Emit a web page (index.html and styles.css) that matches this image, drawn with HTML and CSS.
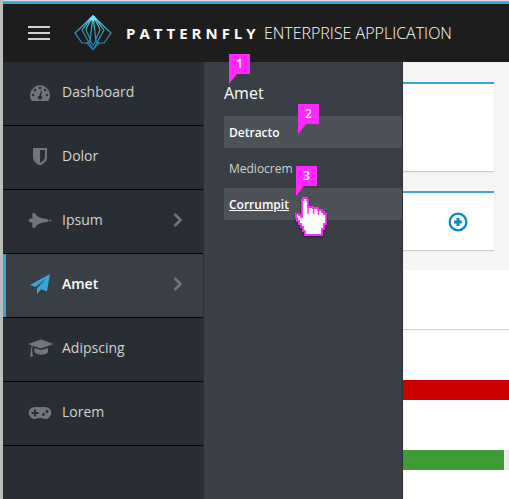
FILE: index.html
```html
<!DOCTYPE html>
<html lang="en">
<head>
<meta charset="utf-8">
<meta name="viewport" content="width=device-width, initial-scale=1">
<title>PatternFly Enterprise Application</title>
<link rel="stylesheet" href="styles.css">
</head>
<body>
<div class="app">
  <header class="masthead">
    <button class="toggle" type="button" aria-label="Toggle navigation"><span></span><span></span><span></span></button>
    <a class="brand" href="#">
      <svg class="logo" viewBox="0 0 38 36" aria-hidden="true">
        <defs><linearGradient id="g" x1="0" y1="0" x2="0" y2="36" gradientUnits="userSpaceOnUse"><stop offset="0" stop-color="#5ff0ff"/><stop offset=".45" stop-color="#349db5"/><stop offset="1" stop-color="#2272b5"/></linearGradient></defs>
        <g fill="none" stroke="url(#g)" stroke-width="1.200">
          <path d="M19 1 1 18l7 10h8M19 1l18 17-7 10h-8"/>
          <path d="M19 1 8 15l11 19.500L30 15Z"/>
          <path d="M19 1l-6 11-1 3 5 11M19 1l6 11 1 3-5 11"/>
          <path d="M19 1l-3 25 3 4 3-4Z"/>
          <path d="m16 26-3 2 6 6.500 6-6.500-3-2"/>
        </g>
        <path d="m19 0 4 4-4 2-4-2Z" fill="#5ff0ff"/>
      </svg>
      <span class="brand-text"><strong>PATTERNFLY</strong> <span>ENTERPRISE APPLICATION</span></span>
    </a>
  </header>
  <div class="body">
    <nav class="nav" aria-label="Primary">
      <a class="nav-item" href="#">
        <svg viewBox="0 0 26 24" aria-hidden="true"><path fill="currentColor" d="M3.500 20.500A10 10 0 1 1 20.500 20.500Q20 21 19.500 21H4.500Q4 21 3.500 20.500Z"/><g fill="#292e34"><circle cx="5" cy="15" r="1.300"/><circle cx="7" cy="10" r="1.300"/><circle cx="12" cy="8" r="1.300"/><circle cx="17" cy="10" r="1.300"/><circle cx="19" cy="15" r="1.300"/><circle cx="12" cy="17.500" r="2.100"/><path d="m11 17 2-6.500 1 .3-1 6.500Z"/></g></svg>
        <span>Dashboard</span>
      </a>
      <a class="nav-item" href="#">
        <svg viewBox="0 0 26 24" aria-hidden="true"><path fill="currentColor" fill-rule="evenodd" d="M5 4h14v9c0 4-3 6.500-7 8.500C8 19.500 5 17 5 13ZM12 6v13c3-1.700 5-3.500 5-6V6Z"/></svg>
        <span>Dolor</span>
      </a>
      <a class="nav-item" href="#">
        <svg viewBox="0 0 26 24" aria-hidden="true"><path fill="currentColor" d="M.5 12.500 2 10.800l2.500-.5V7.500L4 7l1-2h1.500L10 8.800l4 1.500 6 .900 4.500 1.300-4.500 1.300-6 .900-4 1.500L6.500 20H5l-1-2 .5-.500v-2.800L2 14.200Z"/><path stroke="#292e34" stroke-width=".7" d="M20.500 11v3"/></svg>
        <span>Ipsum</span>
        <svg class="chevron" viewBox="0 0 10 16" aria-hidden="true"><path d="m1.500 2 6 6-6 6"/></svg>
      </a>
      <a class="nav-item active" href="#" aria-current="page">
        <svg viewBox="0 0 26 24" aria-hidden="true"><path fill="currentColor" d="M22 2 19 19.500l-6-2.300-4 5v-6L18.500 6 7.500 15 2 13Z"/></svg>
        <span>Amet</span>
        <svg class="chevron" viewBox="0 0 10 16" aria-hidden="true"><path d="m1.500 2 6 6-6 6"/></svg>
      </a>
      <a class="nav-item" href="#">
        <svg viewBox="0 0 26 24" aria-hidden="true"><path fill="currentColor" d="M0 8 13 3.500 26 8l-13 4.500L5 9.800Q4 11 4 14l1 6.500H2L3 14q0-3 1-4.600ZM6.500 12l6.500 2 7-2v4c-2 3.500-11 3.500-13.500 0Z"/></svg>
        <span>Adipscing</span>
      </a>
      <a class="nav-item" href="#">
        <svg viewBox="0 0 26 24" aria-hidden="true"><path fill="currentColor" d="M6.500 7h11a6 6 0 1 1-3.500 11h-4A6 6 0 1 1 6.500 7Z"/><path fill="#292e34" d="M6 9.500h2V12h2.500v2H8v2.500H6V14H3.500v-2H6Z"/><circle cx="15.500" cy="14.500" r="1.400" fill="#292e34"/><circle cx="19" cy="11.500" r="1.400" fill="#292e34"/></svg>
        <span>Lorem</span>
      </a>
    </nav>
    <section class="subnav" aria-labelledby="subnav-title">
      <h2 id="subnav-title">Amet</h2>
      <span class="pin pin-title">1</span>
      <ul>
        <li><a class="sub-link selected" href="#">Detracto</a><span class="pin pin-selected">2</span></li>
        <li><a class="sub-link" href="#">Mediocrem</a></li>
        <li><a class="sub-link hovered" href="#">Corrumpit</a><span class="pin pin-hovered">3</span>
          <svg class="cursor" viewBox="0 0 32 40" aria-hidden="true"><path d="M7 3h1V1h4v2h1v7h5v1h5v2h4v2h2v2h2v10h-2v5h-2v6H10v-4H8v-4H6v-3H4v-3H2v-3H1v-4h3v1h2v2h1Z" fill="#fff" stroke="#ff29ff" stroke-width="1.800"/><path d="M13 10v7M18.500 11v6M23.500 13v5" fill="none" stroke="#ff29ff" stroke-width="1.400"/></svg>
        </li>
      </ul>
    </section>
    <main class="content">
      <div class="cards">
        <section class="card card-tall"></section>
        <section class="card card-short">
          <button class="add" type="button" aria-label="Add"><svg viewBox="0 0 18 18" aria-hidden="true"><circle cx="9" cy="9" r="7.500" fill="none" stroke="#0088ce" stroke-width="2"/><path d="M9 5.500v7M5.500 9h7" stroke="#0088ce" stroke-width="2.600"/></svg></button>
        </section>
      </div>
      <div class="usage">
        <div class="bar"><div class="fill danger"></div></div>
        <div class="bar"><div class="fill success"></div></div>
      </div>
    </main>
  </div>
</div>
</body>
</html>
```
FILE: styles.css
```css
* { box-sizing: border-box; }
body { margin: 0; font-family: "Open Sans", sans-serif; background: #fff; }
a { color: inherit; text-decoration: none; }
button { border: 0; padding: 0; background: none; }
svg { display: block; flex: none; }

.app {
  min-height: 100vh;
  display: flex;
  flex-direction: column;
  border-left: 3px solid #bdbdb9;
}
.masthead {
  height: 62px;
  display: flex;
  align-items: center;
  background: linear-gradient(#d9d9d6 0 1px, #999 1px 2px, #39a5dc 2px 4px, #1d1d1d 4px);
  padding: 4px 25px 0;
}
.toggle { width: 22px; display: flex; flex-direction: column; gap: 4px; }
.toggle span { height: 2px; background: #d4d4d4; }
.brand { display: flex; align-items: center; color: #fff; white-space: nowrap; }
.logo { width: 38px; height: 36px; margin-left: 24px; }
.brand-text { margin-left: 14px; font-size: 16px; line-height: 20px; }
.brand-text strong { font-size: 15px; font-weight: 700; letter-spacing: 4px; }
.brand-text span { font-weight: 300; }

.body { flex: 1; display: flex; }
.nav { width: 201px; flex: none; background: #292e34; padding-right: 1px; }
.nav-item {
  height: 64px;
  display: flex;
  align-items: center;
  gap: 8px;
  padding: 0 20px 4px 25px;
  border-bottom: 1px solid #030303;
  color: #d1d1d1;
  font-size: 14px;
  line-height: 20px;
}
.nav-item svg { width: 26px; height: 24px; color: #72767b; }
.nav-item .chevron { width: 10px; height: 16px; margin-left: auto; fill: none; stroke: #72767b; stroke-width: 2.5; }
.nav-item.active {
  background: linear-gradient(90deg, #39a5dc 3px, #393f44 3px);
  color: #fff;
  font-weight: 600;
}
.nav-item.active svg { color: #39a5dc; }

.subnav {
  position: relative;
  width: 199px;
  flex: none;
  padding: 20px 0 0 20px;
  background: #393f44;
  border-right: 1px solid #292e34;
  color: #fff;
}
.subnav h2 { margin: 0 0 12px; font-size: 16px; line-height: 22px; font-weight: 500; }
.subnav ul { margin: 0; padding: 0; list-style: none; display: flex; flex-direction: column; gap: 4px; }
.subnav li { position: relative; }
.sub-link { display: block; padding: 7px 5px 5px; font-size: 12px; line-height: 20px; color: #d1d1d1; }
.selected, .hovered { background: #4d5258; color: #fff; font-weight: 600; }
.hovered { text-decoration: underline; }
.pin {
  position: absolute;
  width: 21px;
  height: 30px;
  background: #ff29ff;
  clip-path: polygon(0 0, 100% 0, 100% 20px, 8px 20px, 0 100%);
  color: #fff;
  font-size: 12px;
  line-height: 20px;
  font-weight: 600;
  text-align: center;
}
.pin-title { top: -8px; left: 25px; }
.pin-selected { top: -12px; left: 74px; }
.pin-hovered { top: -22px; left: 72px; }
.cursor { position: absolute; top: 9px; left: 71px; width: 32px; height: 40px; filter: drop-shadow(0 1px 1px #0007); }

.content { flex: 1; min-width: 0; }
.cards { padding: 20px 15px 20px 0; background: #f5f5f5; }
.card { background: #fff; border-top: 2px solid #39a5dc; box-shadow: 0 1px 1px rgba(3, 3, 3, 0.175); }
.card-tall { height: 89px; margin-bottom: 20px; }
.card-short { height: 59px; display: flex; align-items: center; justify-content: flex-end; padding-right: 26px; }
.add svg { width: 20px; height: 20px; }
.usage { margin-top: 59px; padding-top: 50px; border-top: 1px solid #d1d1d1; display: flex; flex-direction: column; gap: 50px; }
.bar { height: 20px; background: #ededed; box-shadow: inset 0 0 1px rgba(3, 3, 3, 0.25); }
.fill { height: 100%; }
.danger { width: 100%; background: #c00; }
.success { width: 95%; background: #3f9c35; }
```
